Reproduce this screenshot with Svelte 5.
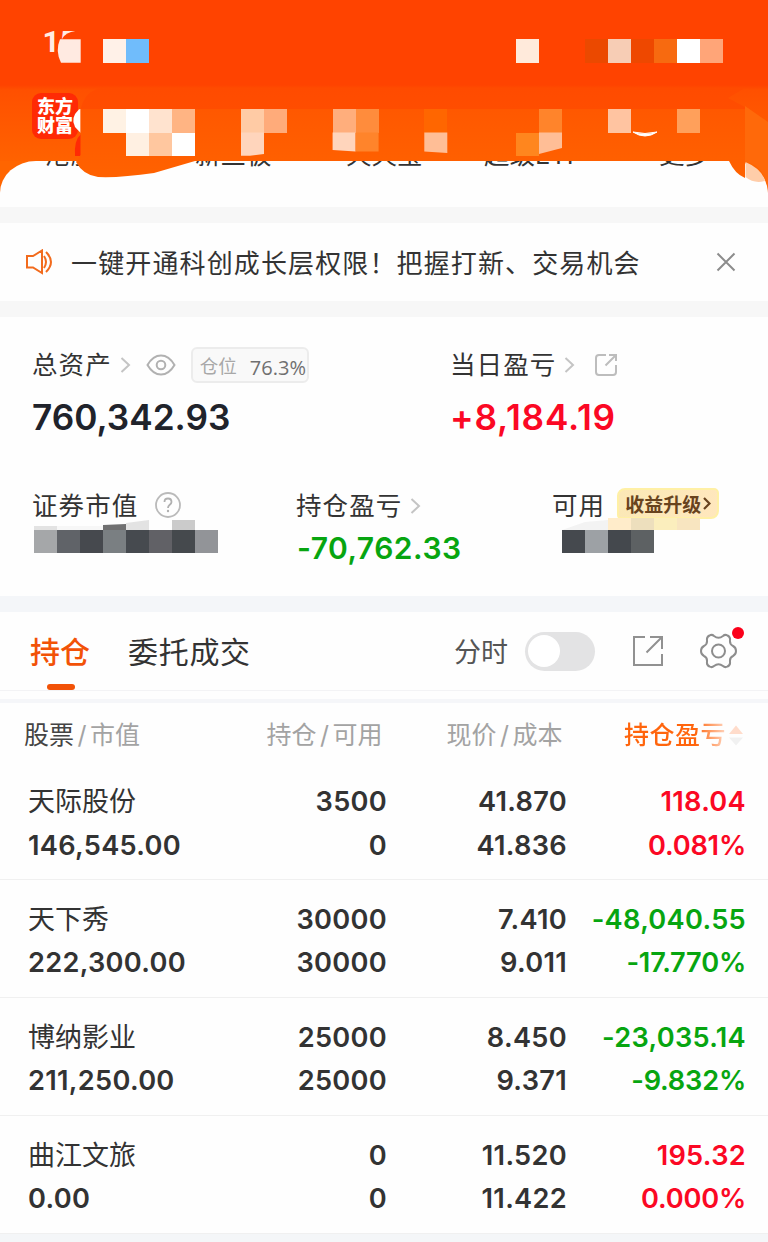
<script lang="ts">
	type Holding = {
		name: string;
		value: string;
		held: string;
		available: string;
		price: string;
		cost: string;
		profit: string;
		rate: string;
		up: boolean;
	};

	const shortcuts = ['港股通', '新三板', '天天宝', '超级ETF', '更多'];

	const holdings: Holding[] = [
		{ name: '天际股份', value: '146,545.00', held: '3500', available: '0', price: '41.870', cost: '41.836', profit: '118.04', rate: '0.081%', up: true },
		{ name: '天下秀', value: '222,300.00', held: '30000', available: '30000', price: '7.410', cost: '9.011', profit: '-48,040.55', rate: '-17.770%', up: false },
		{ name: '博纳影业', value: '211,250.00', held: '25000', available: '25000', price: '8.450', cost: '9.371', profit: '-23,035.14', rate: '-9.832%', up: false },
		{ name: '曲江文旅', value: '0.00', held: '0', available: '0', price: '11.520', cost: '11.422', profit: '195.32', rate: '0.000%', up: true }
	];

	// x, y, colour of each masked block in the header
	const blocks: [number, number, string][] = [
		[103.3, 39.3, '#fff1e8'],
		[126.3, 39.3, '#70bcfb'],
		[516, 39.3, '#ffeadb'],
		[585, 39.3, '#eb4900'],
		[608, 39.3, '#f7cdb5'],
		[631, 39.3, '#ee4800'],
		[654, 39.3, '#f76a10'],
		[676.6, 39.3, '#ffffff'],
		[699.6, 39.3, '#ffa578'],
		[103.3, 109.3, '#fff2e4'],
		[126.3, 109.3, '#ffffff'],
		[149.3, 109.3, '#ffe3cf'],
		[172, 109.3, '#ffb483'],
		[126.3, 132.5, '#fff0e2'],
		[149.3, 132.5, '#ffc79f'],
		[172, 132.5, '#ffffff'],
		[241, 109.3, '#ffcba5'],
		[264, 109.3, '#ffab7a'],
		[332.6, 109.3, '#ffae7c'],
		[355.6, 109.3, '#ff8c3c'],
		[424.3, 109.3, '#ff6600'],
		[539, 109.3, '#ff842b'],
		[608, 109.3, '#ffc4a1'],
		[676.6, 109.3, '#ffa05b'],
		[516, 132.5, '#ff861e']
	];

	let intraday = $state(false);
</script>

<div class="page">
	<header>
		<svg class="art" width="768" height="207" viewBox="0 0 768 207">
			<defs>
				<linearGradient id="brush" x1="0" y1="0" x2="0" y2="1">
					<stop offset="0" stop-color="#ff4b00" />
					<stop offset="0.23" stop-color="#ff4d00" />
					<stop offset="0.24" stop-color="#ff5800" />
					<stop offset="1" stop-color="#ff6200" />
				</linearGradient>
			</defs>
			<text x="42.500" y="52" class="clock">15</text>
			<path d="M71 32 Q63 34 60.500 43 L80 45 V30Z" fill="#ff4300" />
			<path d="M60 39.300 H80.700 V62.700 H61 Q55 51 60 39.300Z" fill="#ffeae1" />
			<rect x="32" y="93" width="46" height="46" rx="9" fill="#ff2a05" />
			<text x="37" y="113" class="logo">东方</text>
			<text x="37" y="132" class="logo">财富</text>
			<path d="M80.700 109.300 H79 Q70 118 75 127 L80.700 133Z" fill="#fff" />
			<path d="M81 134 Q74 140 75 156 H81Z" fill="#ff2a05" />
			<path d="M80.500 110 L80.500 155 L76 162 Q83 175 98 177 Q120 178 154 173 L195 161 H729 Q735 174 745 178 V107 L728 98 L745 88 H100 Q84 92 80.500 110Z" fill="url(#brush)" />
			<path d="M745 106 L768 122 V190 Q764 164 745 162Z" fill="#ff690a" />
			<path d="M745.500 162 Q762 169 765 181 Q754 184 745.500 177Z" fill="#ffcda9" />
			<g shape-rendering="crispEdges">
				{#each blocks as [x, y, color]}
					<rect {x} {y} width="23" height="23.300" fill={color} />
				{/each}
			</g>
			<path d="M241 132.500 H264 V154 L250 155.700 H241Z" fill="#ffd5bc" />
			<path d="M332.600 132.500 H355.600 V151.500 L332.600 150Z" fill="#ffd5bc" />
			<path d="M355.600 132.500 H378.600 V151.500 H355.600Z" fill="#ff842b" />
			<path d="M424.300 132.500 H447.300 V153 L424.300 151.500Z" fill="#ffbe96" />
			<path d="M539 132.500 H562 V148 L539 154Z" fill="#ffbe96" />
			<path d="M633 132 Q645 140 657 132 Q645 135 633 132Z" fill="#fff" stroke="#fff" />
		</svg>
	</header>

	<div class="sheet">
		<nav>
			{#each shortcuts as item}
				<span>{item}</span>
			{/each}
		</nav>
	</div>

	<div class="gap"></div>

	<section class="notice">
		<svg width="30" height="26" viewBox="0 0 30 26" fill="none" stroke="#f26b1d" stroke-width="2">
			<path d="M2 7 H8 L17 1.500 V24 L8 18.500 H2Z" />
			<path d="M19 7 Q23 13 19 19" />
			<path d="M21 3 Q31 13 21 23" />
		</svg>
		<span class="message">一键开通科创成长层权限！把握打新、交易机会</span>
		<svg width="20" height="20" viewBox="0 0 20 20" stroke="#8c8c8c" stroke-width="2">
			<path d="M1.500 1.500 L18.500 18.500 M18.500 1.500 L1.500 18.500" />
		</svg>
	</section>

	<div class="gap"></div>

	<section class="assets">
		<div class="totals">
			<div class="total">
				<div class="label">
					<span class="caption">总资产</span>
					<svg class="chevron" width="11" height="16" viewBox="0 0 11 16"><path d="M1.500 1 L9 8 L1.500 15" /></svg>
					<svg class="eye" width="30" height="22" viewBox="0 0 30 22" fill="none" stroke="#b1b1b1" stroke-width="2">
						<path d="M1.500 11 Q7 1.500 15 1.500 T28.500 11 Q23 20.500 15 20.500 T1.500 11Z" />
						<circle cx="15" cy="11" r="4.300" />
					</svg>
					<span class="position"><span>仓位</span><b>76.3%</b></span>
				</div>
				<div class="amount">760,342.93</div>
			</div>
			<div class="total">
				<div class="label">
					<span class="caption">当日盈亏</span>
					<svg class="chevron" width="11" height="16" viewBox="0 0 11 16"><path d="M1.500 1 L9 8 L1.500 15" /></svg>
					<svg class="share" width="24" height="24" viewBox="0 0 24 24" fill="none" stroke="#bdbdbd" stroke-width="2">
						<path d="M12 2 H5 Q2 2 2 5 V19 Q2 22 5 22 H19 Q22 22 22 19 V12" />
						<path d="M15 2 H22 V8 M22 2 L11.500 12.500" />
					</svg>
				</div>
				<div class="amount day up">+8,184.19</div>
			</div>
		</div>

		<div class="details">
			<div class="detail">
				<div class="label">
					<span class="caption">证券市值</span>
					<svg class="help" width="26" height="26" viewBox="0 0 26 26">
						<circle cx="13" cy="13" r="12" fill="none" stroke="#bababa" stroke-width="1.800" />
						<path d="M9.500 10 Q9.500 6.500 13 6.500 T16.500 10 Q16.500 11.500 14.500 13 Q13 14.200 13 16" fill="none" stroke="#b0b0b0" stroke-width="1.800" />
						<circle cx="13" cy="19" r="1.200" fill="#b0b0b0" />
					</svg>
				</div>
				<svg class="mask" width="184" height="34" viewBox="0 0 184 34">
					<path d="M0 6 H23 V10 H0Z M92 3 L115 0 V10 H92Z" fill="#e3e3e3" />
					<path d="M23 6 H69 V10 H23Z" fill="#f7f7f7" />
					<path d="M69 5 L92 4 V10 H69Z" fill="#707071" />
					<path d="M138 0 H161 V10 H138Z" fill="#cbcbcb" />
					{#each ['#a5a7a9', '#606368', '#46494e', '#7a7f82', '#464a4f', '#616166', '#45494d', '#929498'] as color, i}
						<rect x={i * 23} y="10" width="23" height="23" fill={color} />
					{/each}
				</svg>
			</div>
			<div class="detail">
				<div class="label">
					<span class="caption">持仓盈亏</span>
					<svg class="chevron" width="11" height="16" viewBox="0 0 11 16"><path d="M1.500 1 L9 8 L1.500 15" /></svg>
				</div>
				<div class="sub-amount down">-70,762.33</div>
			</div>
			<div class="detail">
				<div class="label">
					<span class="caption">可用</span>
					<span class="upgrade">
						收益升级
						<svg width="8" height="13" viewBox="0 0 8 13" fill="none" stroke="#68431e" stroke-width="2.200"><path d="M1 1 L6.500 6.500 L1 12" /></svg>
					</span>
				</div>
				<svg class="mask" width="138" height="36" viewBox="0 0 138 36">
					<path d="M0 12 L23 4 L46 2 V12Z" fill="#f3f3f3" />
					<rect x="46" width="23" height="12" fill="#ffecca" />
					<rect x="69" width="23" height="12" fill="#eddfbd" />
					<rect x="92" width="23" height="12" fill="#fbeebd" />
					<rect x="115" width="23" height="12" fill="#f8e5c0" />
					{#each ['#45494e', '#9da1a5', '#44484d', '#5d6163'] as color, i}
						<rect x={i * 23} y="12" width="23" height="23" fill={color} />
					{/each}
				</svg>
			</div>
		</div>
	</section>

	<div class="gap blue"></div>

	<section class="tabs">
		<button class="tab active">持仓</button>
		<button class="tab">委托成交</button>
		<span class="intraday">分时</span>
		<button class="switch" class:on={intraday} aria-label="分时" onclick={() => (intraday = !intraday)}><i></i></button>
		<svg class="export" width="32" height="32" viewBox="0 0 32 32" fill="none" stroke="#919191" stroke-width="2">
			<path d="M13 2 H2 V30 H30 V19" />
			<path d="M18 2 H30 V14 M30 2 L14.500 17.500" />
		</svg>
		<span class="settings">
			<svg width="37" height="36" viewBox="0 0 37 36" fill="none" stroke="#8d8d8d" stroke-width="2" stroke-linejoin="round">
				<path d="M14 3 Q18.500 6.500 23 3 Q25 1 27.500 2.500 Q30.500 4 30 7 Q29.500 11.500 33 13 Q36 14.500 36 18 Q36 21.500 33 23 Q29.500 24.500 30 29 Q30.500 32 27.500 33.500 Q25 35 23 33 Q18.500 29.500 14 33 Q12 35 9.500 33.500 Q6.500 32 7 29 Q7.500 24.500 4 23 Q1 21.500 1 18 Q1 14.500 4 13 Q7.500 11.500 7 7 Q6.500 4 9.500 2.500 Q12 1 14 3Z" />
				<circle cx="18.500" cy="18" r="6.500" />
			</svg>
			<i class="dot"></i>
		</span>
	</section>
	<div class="divider"></div>

	<div class="columns head">
		<span><b>股票</b><em>/</em>市值</span>
		<span>持仓<em>/</em>可用</span>
		<span>现价<em>/</em>成本</span>
		<span class="sorted">
			<span class="fade">持仓盈亏</span>
			<svg width="14" height="21" viewBox="0 0 14 21"><path d="M0 9 L7 0.500 L14 9Z" fill="#ffdccb" /><path d="M0 12.500 L7 20.500 L14 12.500Z" fill="#f1f1f1" /></svg>
		</span>
	</div>

	{#each holdings as h}
		<div class="columns row">
			<div><span class="name">{h.name}</span><span>{h.value}</span></div>
			<div><span>{h.held}</span><span>{h.available}</span></div>
			<div><span>{h.price}</span><span>{h.cost}</span></div>
			<div class:up={h.up} class:down={!h.up}><span>{h.profit}</span><span class="rate">{h.rate}</span></div>
		</div>
	{/each}
</div>

<style>
	:global(body) {
		margin: 0;
		background: #f4f6f8;
	}

	.page {
		width: 768px;
		height: 1242px;
		overflow: hidden;
		font-family: Inter, 'Noto Sans CJK SC', sans-serif;
		color: #333;
		background: #f4f6f8;
	}

	svg {
		display: block;
		flex: none;
	}

	header {
		position: relative;
		height: 161px;
		background: linear-gradient(#ff4300 0 85px, #ff5000 90px, #ff6200 161px);
	}

	.art {
		position: absolute;
		top: 0;
		left: 0;
		z-index: 1;
	}

	.clock {
		font: 700 30px Roboto, sans-serif;
		fill: #ffece2;
	}

	.logo {
		font: 900 18px 'Noto Sans CJK SC', sans-serif;
		fill: #fff;
	}

	.sheet {
		height: 46px;
		background: #ff6500;
	}

	nav {
		display: grid;
		grid-template-columns: 150px 151px 138px 175px 1fr;
		height: 46px;
		overflow: hidden;
		box-sizing: border-box;
		padding-left: 45px;
		border-radius: 36px 36px 0 0 / 32px 32px 0 0;
		background: #fefefe;
		font-size: 25.5px;
		line-height: 36px;
	}

	nav span {
		margin-top: -24px;
	}

	.gap {
		height: 16px;
		background: #f7f7f7;
	}

	.gap.blue {
		background: #f4f6f9;
	}

	.notice {
		display: flex;
		align-items: center;
		height: 78px;
		padding: 0 32px 0 25px;
		background: #fefefe;
	}

	.message {
		flex: 1;
		margin: -2px 0 0 16px;
		font-size: 26px;
		letter-spacing: 1.13px;
		white-space: nowrap;
	}

	.assets {
		height: 279px;
		background: #fefefe;
	}

	.label {
		display: flex;
		align-items: center;
		height: 40px;
		font-size: 25.5px;
		letter-spacing: 1.1px;
		white-space: nowrap;
	}

	.caption {
		margin-top: -5px;
	}

	.totals {
		display: grid;
		grid-template-columns: 418px 1fr;
		padding: 28px 0 0 32px;
	}

	.amount {
		margin-top: 9px;
		font-size: 35.2px;
		font-weight: 600;
		line-height: 46px;
		color: #20232b;
	}

	.amount.day {
		letter-spacing: 0.8px;
	}

	.chevron {
		margin-left: 8px;
		fill: none;
		stroke: #c4c4c4;
		stroke-width: 2;
	}

	.eye {
		margin-left: 15px;
	}

	.position {
		display: flex;
		align-items: center;
		box-sizing: border-box;
		width: 118px;
		height: 36px;
		margin-left: 15px;
		padding-left: 7px;
		border: 2px solid #ececec;
		border-radius: 6px;
		background: #f9f9f9;
		color: #a8a8a8;
		font-size: 18.5px;
		letter-spacing: 0;
	}

	.position b {
		margin: 5px 0 0 13px;
		color: #707070;
		font: 400 20px 'Open Sans', sans-serif;
	}

	.share {
		margin-left: 19px;
	}

	.up,
	.amount.up {
		color: #fb0824;
	}

	.down {
		color: #07a510;
	}

	.details {
		display: grid;
		grid-template-columns: 264px 256px 1fr;
		padding: 45px 0 0 32px;
	}

	.detail .label {
		height: 42px;
	}

	.detail:first-child .mask {
		margin: -7px 0 0 2px;
	}

	.detail:last-child .mask {
		margin: -9px 0 0 10px;
	}

	.help {
		margin: -2px 0 0 17px;
	}

	.sub-amount {
		margin-left: 1px;
		font-size: 30px;
		font-weight: 600;
		letter-spacing: 0.5px;
		line-height: 42px;
	}

	.upgrade {
		display: flex;
		align-items: center;
		justify-content: center;
		gap: 2px;
		box-sizing: border-box;
		width: 102px;
		height: 31px;
		margin: -5px 0 0 12px;
		border: 2px solid #fff0a5;
		border-radius: 8px 5px 8px 4px;
		background: linear-gradient(100deg, #fbe8b6, #ffe7bd);
		color: #68431e;
		font-size: 19px;
		font-weight: 700;
		letter-spacing: 0;
	}

	.tabs {
		display: flex;
		align-items: center;
		height: 78px;
		padding: 0 31px 0 30px;
		border-bottom: 1px solid #f3f3f5;
		background: #fefefe;
	}

	.tab {
		position: relative;
		height: 78px;
		padding: 0 0 2px;
		border: none;
		background: none;
		color: #333;
		font: 500 30px 'Noto Sans CJK SC', sans-serif;
	}

	.tab + .tab {
		margin-left: 38px;
		font-weight: 400;
		letter-spacing: 0.7px;
	}

	.tab.active {
		color: #f25207;
	}

	.tab.active::after {
		position: absolute;
		bottom: 0;
		left: 17px;
		width: 28px;
		height: 6px;
		border-radius: 3px;
		background: #f25207;
		content: '';
	}

	.intraday {
		margin: -2px 0 0 auto;
		color: #555;
		font-size: 27px;
	}

	.switch {
		width: 70px;
		height: 39px;
		margin-left: 17px;
		padding: 3px;
		border: none;
		border-radius: 20px;
		background: #e3e3e4;
	}

	.switch i {
		display: block;
		width: 32px;
		height: 32px;
		border-radius: 50%;
		background: #fff;
	}

	.switch.on i {
		margin-left: auto;
	}

	.export {
		margin-left: 37px;
	}

	.settings {
		position: relative;
		margin-left: 36px;
	}

	.dot {
		position: absolute;
		top: -6px;
		right: -7px;
		width: 12px;
		height: 12px;
		border-radius: 50%;
		background: #fb001a;
	}

	.divider {
		height: 4px;
		border-top: 8px solid #fefefe;
		background: #f5f6f9;
	}

	.columns {
		display: grid;
		grid-template-columns: 170px 189px 180px 179px;
		padding-left: 28px;
		background: #fefefe;
		text-align: right;
	}

	.columns > :first-child {
		text-align: left;
	}

	.head {
		height: 59px;
		color: #a3a3a3;
		font-size: 25px;
		line-height: 65px;
	}

	.head > span {
		margin-right: 4.5px;
	}

	.head > :first-child {
		margin-left: -4px;
	}

	.head b {
		color: #444;
		font-weight: 400;
	}

	.head em {
		margin: 0 3.5px;
		font-style: normal;
	}

	.sorted {
		display: flex;
		align-items: center;
		justify-content: flex-end;
		gap: 3px;
		white-space: nowrap;
	}

	.head .sorted {
		margin-right: 3px;
	}

	.fade {
		background: linear-gradient(90deg, #ff650d 70%, #ffd5bf);
		background-clip: text;
		color: transparent;
		font-weight: 500;
		letter-spacing: 0.5px;
	}

	.row {
		box-sizing: border-box;
		height: 117.9px;
		padding-top: 18px;
		border-bottom: 1px solid #f0f0f0;
		font-size: 27.2px;
		font-weight: 600;
		letter-spacing: 0.3px;
		line-height: 43.5px;
	}

	.row span {
		display: block;
		height: 43.5px;
	}

	.row .name {
		font-size: 27px;
		font-weight: 400;
		letter-spacing: 0;
	}

	.row .rate {
		letter-spacing: -0.2px;
	}
</style>
